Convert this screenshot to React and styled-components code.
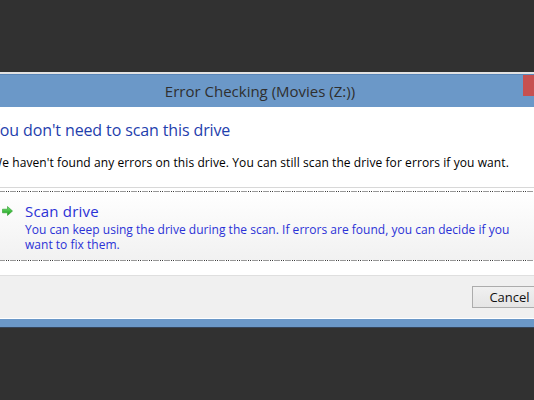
import React from 'react';
import styled, { createGlobalStyle } from 'styled-components';

const Global = createGlobalStyle`
  html, body { margin: 0; padding: 0; background: #313131; }
  body { font-family: "Open Sans", "Noto Sans", sans-serif; }
`;

const Page = styled.div`
  width: 534px;
  height: 400px;
  overflow: hidden;
  background: #313131;
  padding-top: 72px;
  box-sizing: border-box;
`;

const Window = styled.div`
  margin-left: -30px;
  width: 598px;
  border-top: 2px solid #e2e2e2;
  background: #6b98c8;
  padding-bottom: 8px;
  border-bottom: 1px solid #34445a;
`;

const TitleBar = styled.div`
  display: flex;
  align-items: flex-start;
  height: 32px;
  border-top: 1px solid #5a87ba;
`;

const Title = styled.div`
  flex: 1;
  padding-left: 27px;
  text-align: center;
  line-height: 32px;
  font-size: 15px;
  color: #2f2f2f;
`;

const CloseButton = styled.div`
  width: 45px;
  height: 21px;
  background: #c75050;
`;

const Client = styled.div`
  background: #ffffff;
`;

const Content = styled.div`
  padding: 12px 21px 14px;
`;

const Heading = styled.h1`
  margin: 0;
  font-weight: 400;
  font-size: 16px;
  line-height: 22px;
  letter-spacing: -0.12px;
  color: #1f40ad;
  white-space: nowrap;
`;

const Message = styled.p`
  margin: 14px 0 0;
  font-size: 12px;
  line-height: 16px;
  letter-spacing: 0.085px;
  color: #000;
  white-space: nowrap;
`;

const Separator = styled.div`
  margin-top: 16px;
  height: 1px;
  background: #d8d8d8;
`;

const FocusEdge = styled.div`
  height: 1px;
  background: repeating-linear-gradient(
    90deg,
    #9a9a9a 0 6px,
    #ffffff 6px 7px,
    #3c3c3c 7px 8px,
    #ffffff 8px 9px,
    #3c3c3c 9px 10px,
    #ffffff 10px 11px
  );
`;

const CommandLink = styled.div`
  margin: 3px -3px 0;
  background: linear-gradient(#ffffff, #f1f1f1);
`;

const CommandBody = styled.div`
  display: flex;
  align-items: flex-start;
  padding: 9px 0 8px 14px;
  min-height: 51px;
`;

const ArrowBox = styled.div`
  width: 11px;
  height: 20px;
  margin-right: 12px;
  display: flex;
  align-items: center;
`;

const CommandText = styled.div`
  display: flex;
  flex-direction: column;
  color: #2b32d6;
`;

const CommandTitle = styled.div`
  font-size: 15px;
  line-height: 20px;
  letter-spacing: 0.2px;
  margin-bottom: 1px;
`;

const CommandNote = styled.div`
  font-size: 12px;
  line-height: 15px;
  letter-spacing: 0.02px;
  width: 500px;
`;

const Footer = styled.div`
  display: flex;
  justify-content: flex-end;
  padding: 10px 21px;
  background: #f0f0f0;
  border-top: 1px solid #dfdfdf;
  border-bottom: 1px solid #ffffff;
`;

const Button = styled.button`
  width: 75px;
  height: 22px;
  padding: 0;
  border: 1px solid #acacac;
  background: linear-gradient(#f0f0f0, #e5e5e5);
  font-family: inherit;
  font-size: 13px;
  color: #111;
`;

const GreenArrow = () => (
  <svg width="11" height="10" viewBox="0 0 11 10">
    <defs>
      <linearGradient id="ga" x1="0" y1="0" x2="0" y2="1">
        <stop offset="0" stopColor="#74e474" />
        <stop offset="1" stopColor="#169a16" />
      </linearGradient>
    </defs>
    <path d="M0.5 3.2 H5.5 V0.5 L10.5 5 L5.5 9.5 V6.8 H0.5 Z" fill="url(#ga)" stroke="#2a9a2a" strokeWidth="0.6" strokeLinejoin="round" />
  </svg>
);

export default function App() {
  return (
    <Page>
      <Global />
      <Window>
        <TitleBar>
          <Title>Error Checking (Movies (Z:))</Title>
          <CloseButton />
        </TitleBar>
        <Client>
          <Content>
            <Heading>You don't need to scan this drive</Heading>
            <Message>
              We haven't found any errors on this drive. You can still scan the drive for errors if you want.
            </Message>
            <Separator />
            <CommandLink>
              <FocusEdge />
              <CommandBody>
                <ArrowBox>
                  <GreenArrow />
                </ArrowBox>
                <CommandText>
                  <CommandTitle>Scan drive</CommandTitle>
                  <CommandNote>
                    You can keep using the drive during the scan. If errors are found, you can decide if you want to fix them.
                  </CommandNote>
                </CommandText>
              </CommandBody>
              <FocusEdge />
            </CommandLink>
          </Content>
          <Footer>
            <Button>Cancel</Button>
          </Footer>
        </Client>
      </Window>
    </Page>
  );
}
